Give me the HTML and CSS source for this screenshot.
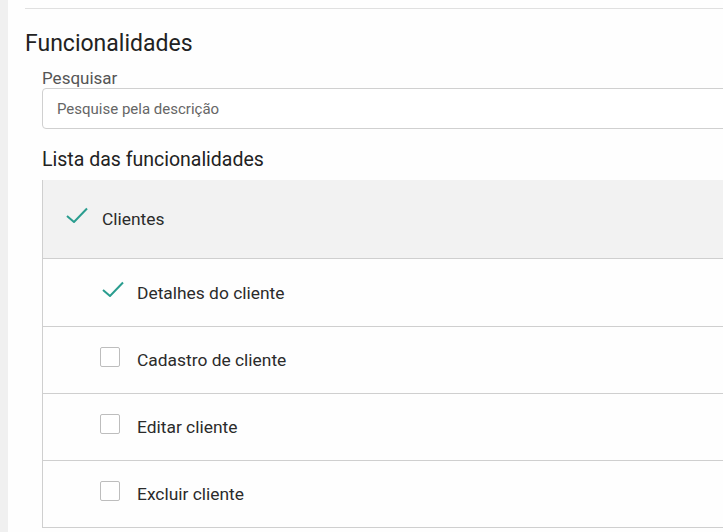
FILE: index.html
```html
<!DOCTYPE html>
<html lang="pt-BR">
<head>
    <meta charset="UTF-8">
    <meta name="viewport" content="width=device-width, initial-scale=1.0">
    <title>Funcionalidades</title>
    <link rel="stylesheet" href="styles.css">
</head>
<body>
    <main class="panel">
        <div class="panel-body">
            <h2 class="section-title">Funcionalidades</h2>

            <div class="section-content">
                <label class="field-label" for="search">Pesquisar</label>
                <input type="text" id="search" class="input-field" placeholder="Pesquise pela descrição">

                <h3 class="list-title">Lista das funcionalidades</h3>

                <div class="feature-list">
                    <div class="feature-row group-row">
                        <svg class="check-icon" viewBox="0 0 22 16"><path d="M1 9l7 6L21 1.5"/></svg>
                        <span>Clientes</span>
                    </div>
                    <div class="feature-row child-row">
                        <svg class="check-icon" viewBox="0 0 22 16"><path d="M1 9l7 6L21 1.5"/></svg>
                        <span>Detalhes do cliente</span>
                    </div>
                    <div class="feature-row child-row">
                        <span class="checkbox"></span>
                        <span>Cadastro de cliente</span>
                    </div>
                    <div class="feature-row child-row">
                        <span class="checkbox"></span>
                        <span>Editar cliente</span>
                    </div>
                    <div class="feature-row child-row">
                        <span class="checkbox"></span>
                        <span>Excluir cliente</span>
                    </div>
                </div>
            </div>
        </div>
    </main>
</body>
</html>
```

FILE: styles.css
```css
/* Permissions screen - feature list */
* {
    margin: 0;
    padding: 0;
    box-sizing: border-box;
}

body {
    font-family: Roboto, 'Liberation Sans', sans-serif;
    background-color: #f0f0f0;
    color: #2b2b2b;
    overflow: hidden;
}

.panel {
    margin-left: 8px;
    background-color: #fefefe;
    min-height: 100vh;
    padding: 8px 0 0 17px;
}

.panel-body {
    border-top: 1px solid #e0e0e0;
}

.section-title {
    font-size: 23px;
    font-weight: 400;
    line-height: 27px;
    margin-top: 21px;
    color: #222;
}

.section-content {
    padding-left: 17px;
}

.field-label {
    display: block;
    font-size: 17px;
    line-height: 20px;
    margin-top: 11px;
    color: #555;
}

.input-field {
    display: block;
    width: calc(100% + 10px);
    height: 41px;
    padding: 0 14px;
    border: 1px solid #d0d0d0;
    border-radius: 4px;
    font-family: inherit;
    font-size: 15px;
    color: #333;
    background-color: #fff;
}

.input-field::placeholder {
    color: #666;
}

.list-title {
    font-size: 19.5px;
    font-weight: 400;
    line-height: 23px;
    margin-top: 19px;
    margin-bottom: 9px;
    color: #222;
}

.feature-list {
    border-left: 1px solid #cfcfcf;
}

.feature-row {
    display: flex;
    align-items: center;
    border-bottom: 1px solid #cfcfcf;
    font-size: 17.4px;
    color: #2b2b2b;
}

.group-row {
    height: 79px;
    padding-left: 23px;
    background-color: #f2f2f2;
    gap: 14px;
}

.child-row {
    height: 67px;
    padding-left: 57px;
}

.group-row + .child-row {
    height: 68px;
}

.check-icon {
    width: 22px;
    height: 16px;
    fill: none;
    stroke: #2a9d8f;
    stroke-width: 2;
}

.group-row .check-icon {
    margin-top: -9px;
}

.child-row .check-icon {
    margin: -7px 13px 0 2px;
}

.checkbox {
    width: 20px;
    height: 20px;
    border: 1px solid #bdbdbd;
    border-radius: 2px;
    margin-right: 17px;
    margin-top: -6px;
    background-color: #fff;
}
```
